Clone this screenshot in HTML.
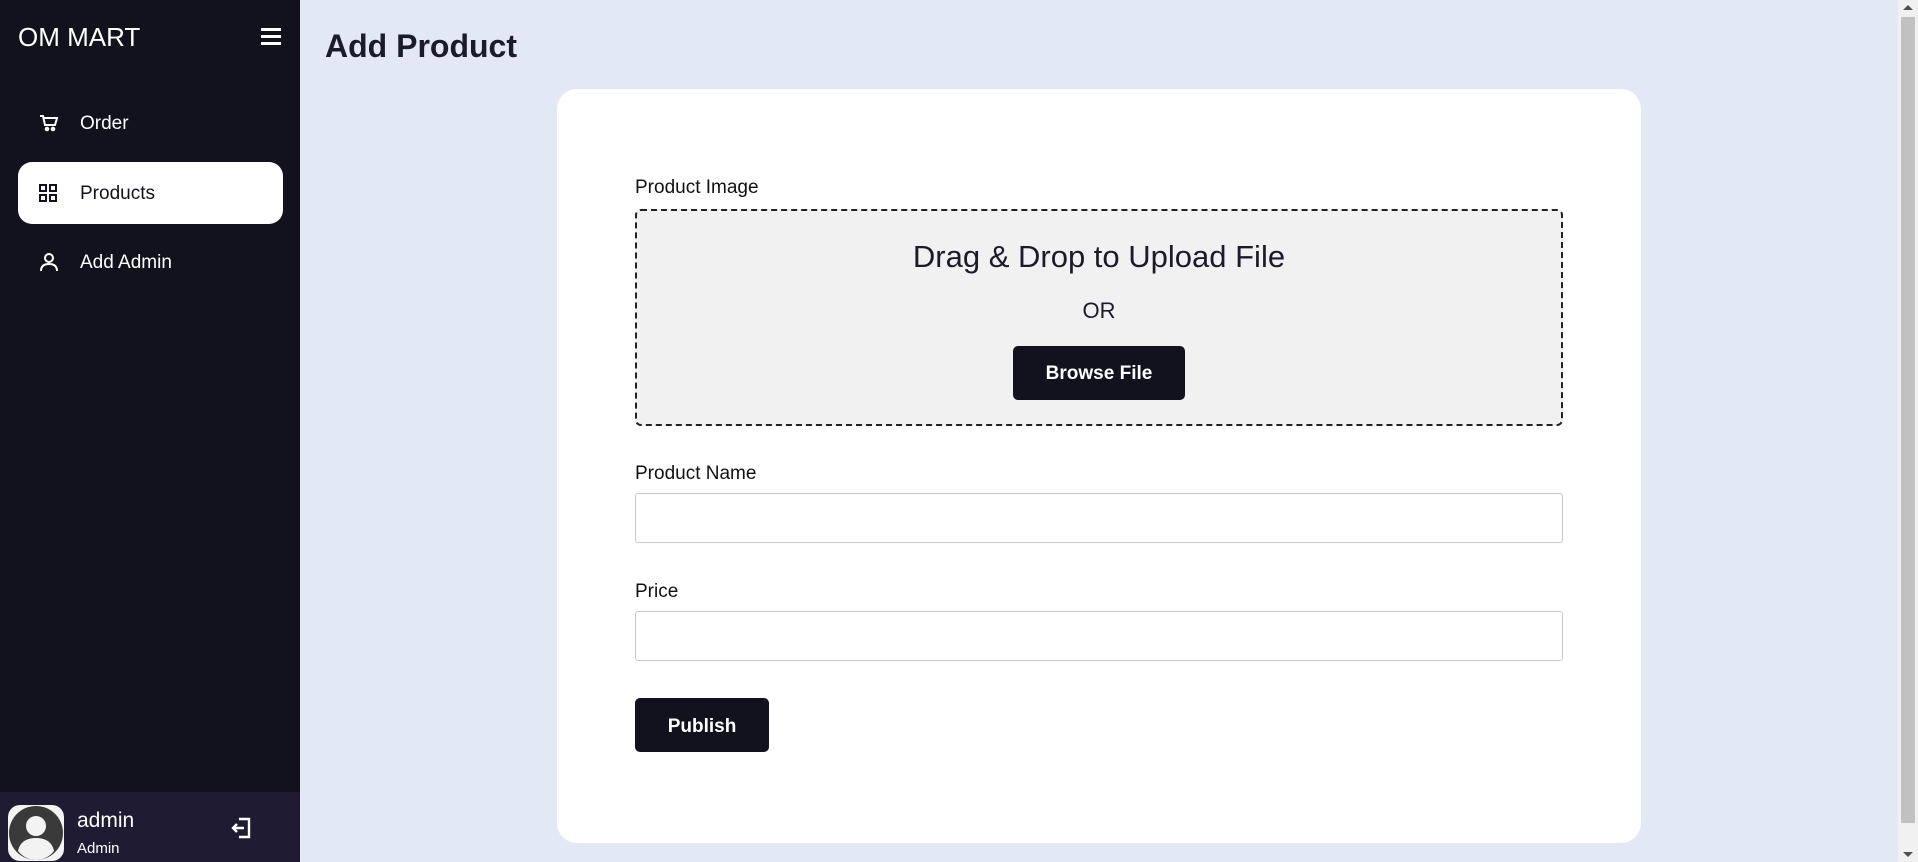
<!DOCTYPE html>
<html><head><meta charset="utf-8"><style>
*{box-sizing:border-box;margin:0;padding:0}
body{width:1918px;height:862px;overflow:hidden;background:#e3e8f5;font-family:"Liberation Sans",sans-serif;position:relative}
.sb{position:absolute;left:0;top:0;width:300px;height:862px;background:#12121f;color:#fff}
.logo{position:absolute;left:18px;top:22px;font-size:26px}
.ham{position:absolute;left:261px;top:28px;width:20px}
.ham i{display:block;height:3px;background:#fff;margin-bottom:4px}
.item{position:absolute;left:18px;width:265px;height:62px;border-radius:14px;font-size:19px;display:flex;align-items:center}
.item svg{position:absolute;left:21px}
.item span{position:absolute;left:62px;top:21px}
.act{background:#fff;color:#12121f}
.user{position:absolute;left:0;top:792px;width:300px;height:70px;background:#1e1b33}
.av{position:absolute;left:8px;top:13px;width:56px;height:56px;border-radius:12px;background:#f3f3f3;overflow:hidden}
h1{position:absolute;left:325px;top:28px;font-size:32px;font-weight:600;color:#1b1b2b}
.card{position:absolute;left:557px;top:89px;width:1084px;height:754px;background:#fff;border-radius:20px}
.lbl{position:absolute;left:635px;font-size:19px;color:#111}
.drop{position:absolute;left:635px;top:209px;width:928px;height:217px;background:#f1f1f1;border:2px dashed #222;border-radius:6px;text-align:center;color:#1b1b2b}
.btn{position:absolute;background:#12121f;color:#fff;border-radius:5px;font-weight:bold;font-size:19px;display:flex;align-items:center;justify-content:center}
.inp{position:absolute;left:635px;width:928px;height:50px;border:1px solid #c8c8c8;border-radius:3px;background:#fff}
.scr{position:absolute;right:0;top:0;width:20px;height:862px;background:#f1f1f1}
.thumb{position:absolute;left:3px;top:17px;width:14px;height:806px;background:#c1c1c1}
</style></head><body>
<div class="sb">
<div class="logo">OM MART</div>
<div class="ham"><i></i><i></i><i></i></div>
<div class="item" style="top:92px"><svg width="20" height="20" viewBox="0 0 20 20" fill="none" stroke="#fff" stroke-width="2"><path d="M1 3h3l2 9h10l2-7H5"/><circle cx="8" cy="16" r="1.3"/><circle cx="14" cy="16" r="1.3"/></svg><span>Order</span></div>
<div class="item act" style="top:162px"><svg width="18" height="18" viewBox="0 0 18 18" fill="none" stroke="#12121f" stroke-width="2"><rect x="1" y="1" width="6" height="6"/><rect x="11" y="1" width="6" height="6"/><rect x="1" y="11" width="6" height="6"/><rect x="11" y="11" width="6" height="6"/></svg><span>Products</span></div>
<div class="item" style="top:231px"><svg width="20" height="20" viewBox="0 0 20 20" fill="none" stroke="#fff" stroke-width="2"><circle cx="10" cy="6" r="4"/><path d="M2 19c0-5 3-7 8-7s8 2 8 7"/></svg><span>Add Admin</span></div>
<div class="user">
<div class="av"><svg width="56" height="56" viewBox="0 0 56 56"><circle cx="28" cy="28" r="27" fill="#3a3a3a"/><circle cx="28" cy="21" r="10" fill="#f3f3f3"/><path d="M10 46c2-10 10-13 18-13s16 3 18 13c-5 6-11 9-18 9s-13-3-18-9z" fill="#f3f3f3"/></svg></div>
<div style="position:absolute;left:77px;top:17px;font-size:21px">admin</div>
<div style="position:absolute;left:77px;top:48px;font-size:15px">Admin</div>
<svg style="position:absolute;left:230px;top:24px" width="22" height="24" viewBox="0 0 22 24" fill="none" stroke="#fff" stroke-width="2.4"><path d="M9 3h10v18H9"/><path d="M14 12H3M7 8l-4 4 4 4"/></svg>
</div>
</div>
<h1>Add Product</h1>
<div class="card"></div>
<div class="lbl" style="top:177px">Product Image</div>
<div class="drop">
<div style="position:absolute;left:0;right:0;top:28px;font-size:31px">Drag &amp; Drop to Upload File</div>
<div style="position:absolute;left:0;right:0;top:87px;font-size:22px">OR</div>
</div>
<div class="btn" style="left:1013px;top:346px;width:172px;height:54px;padding-top:2px">Browse File</div>
<div class="lbl" style="top:463px">Product Name</div>
<div class="inp" style="top:493px"></div>
<div class="lbl" style="top:581px">Price</div>
<div class="inp" style="top:611px"></div>
<div class="btn" style="left:635px;top:698px;width:134px;height:54px;padding-top:3px">Publish</div>
<div class="scr"><div class="thumb"></div>
<div style="position:absolute;left:5px;top:5px;border:5px solid transparent;border-bottom-color:#505050;border-top:0"></div>
<div style="position:absolute;left:5px;bottom:5px;border:5px solid transparent;border-top-color:#505050;border-bottom:0"></div></div>
</body></html>
